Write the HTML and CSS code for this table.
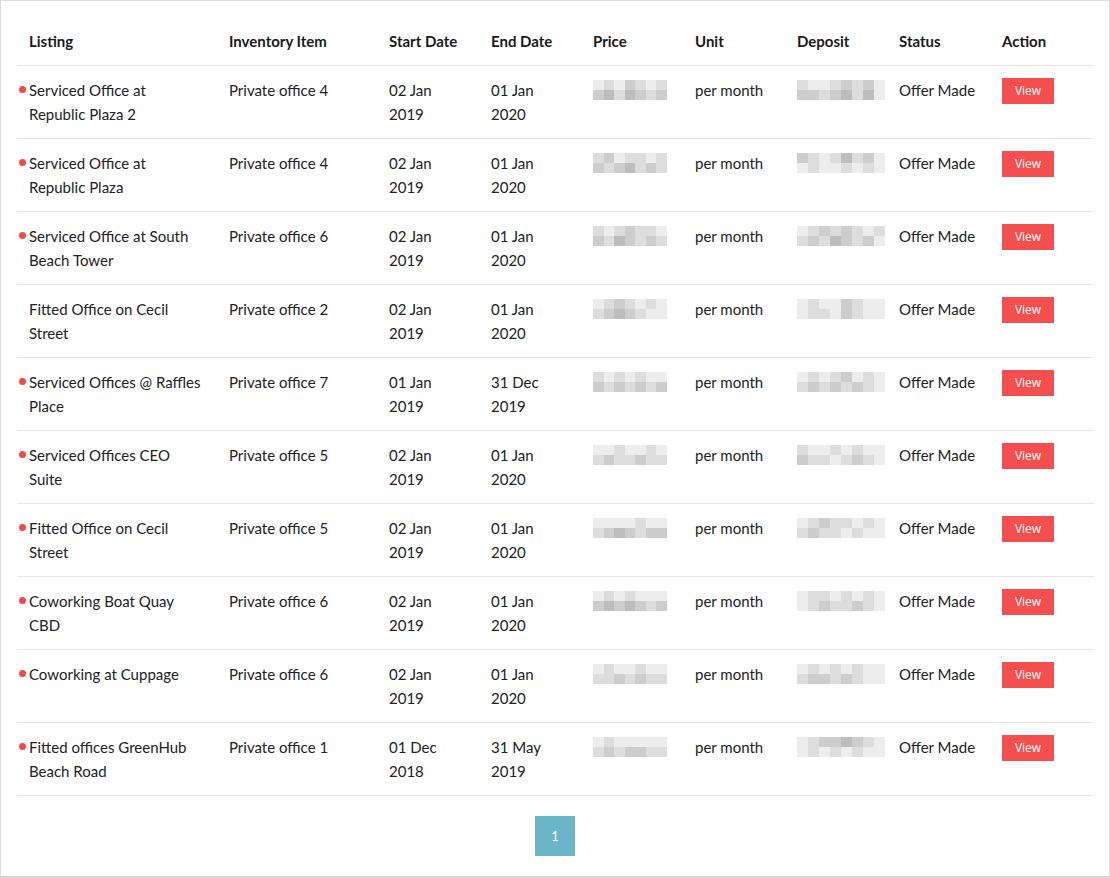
FILE: index.html
```html
<!DOCTYPE html>
<html>
<head>
<meta charset="utf-8">
<link rel="stylesheet" href="styles.css">
</head>
<body>
<div class="frame">
<table class="offers">
<colgroup>
<col class="c-listing"><col class="c-inv"><col class="c-d"><col class="c-d"><col class="c-d"><col class="c-d"><col class="c-d"><col class="c-st"><col class="c-st">
</colgroup>
<thead>
<tr><th>Listing</th><th>Inventory Item</th><th>Start Date</th><th>End Date</th><th>Price</th><th>Unit</th><th>Deposit</th><th>Status</th><th>Action</th></tr>
</thead>
<tbody>
<tr><td class="listing dot">Serviced Office at Republic Plaza 2</td><td>Private office 4</td><td>02 Jan 2019</td><td>01 Jan 2020</td><td><span class="blur"><i class="a"></i><i class="b"></i><i class="a"></i><i class="c"></i><i class="b"></i><i class="a"></i><i class="b"></i><i class="c"></i><i class="d"></i><i class="b"></i><i class="d"></i><i class="c"></i><i class="b"></i><i class="c"></i></span></td><td>per month</td><td><span class="blur wide"><i class="b"></i><i class="a"></i><i class="a"></i><i class="b"></i><i class="c"></i><i class="b"></i><i class="c"></i><i class="a"></i><i class="c"></i><i class="c"></i><i class="b"></i><i class="c"></i><i class="d"></i><i class="b"></i><i class="d"></i><i class="a"></i></span></td><td>Offer Made</td><td><a class="view">View</a></td></tr>
<tr><td class="listing dot">Serviced Office at Republic Plaza</td><td>Private office 4</td><td>02 Jan 2019</td><td>01 Jan 2020</td><td><span class="blur"><i class="b"></i><i class="c"></i><i class="a"></i><i class="b"></i><i class="b"></i><i class="a"></i><i class="b"></i><i class="c"></i><i class="b"></i><i class="c"></i><i class="d"></i><i class="b"></i><i class="c"></i><i class="b"></i></span></td><td>per month</td><td><span class="blur wide"><i class="c"></i><i class="b"></i><i class="a"></i><i class="b"></i><i class="d"></i><i class="b"></i><i class="c"></i><i class="a"></i><i class="a"></i><i class="b"></i><i class="a"></i><i class="a"></i><i class="b"></i><i class="a"></i><i class="b"></i><i class="a"></i></span></td><td>Offer Made</td><td><a class="view">View</a></td></tr>
<tr><td class="listing dot">Serviced Office at South Beach Tower</td><td>Private office 6</td><td>02 Jan 2019</td><td>01 Jan 2020</td><td><span class="blur"><i class="b"></i><i class="a"></i><i class="b"></i><i class="c"></i><i class="b"></i><i class="b"></i><i class="a"></i><i class="c"></i><i class="b"></i><i class="d"></i><i class="c"></i><i class="b"></i><i class="c"></i><i class="b"></i></span></td><td>per month</td><td><span class="blur wide"><i class="a"></i><i class="b"></i><i class="c"></i><i class="b"></i><i class="c"></i><i class="b"></i><i class="a"></i><i class="b"></i><i class="b"></i><i class="c"></i><i class="b"></i><i class="d"></i><i class="c"></i><i class="b"></i><i class="c"></i><i class="a"></i></span></td><td>Offer Made</td><td><a class="view">View</a></td></tr>
<tr><td class="listing">Fitted Office on Cecil Street</td><td>Private office 2</td><td>02 Jan 2019</td><td>01 Jan 2020</td><td><span class="blur"><i class="a"></i><i class="b"></i><i class="c"></i><i class="b"></i><i class="a"></i><i class="b"></i><i class="a"></i><i class="b"></i><i class="c"></i><i class="d"></i><i class="c"></i><i class="b"></i><i class="a"></i><i class="a"></i></span></td><td>per month</td><td><span class="blur wide"><i class="a"></i><i class="b"></i><i class="a"></i><i class="a"></i><i class="c"></i><i class="b"></i><i class="a"></i><i class="a"></i><i class="a"></i><i class="b"></i><i class="b"></i><i class="a"></i><i class="c"></i><i class="b"></i><i class="a"></i><i class="a"></i></span></td><td>Offer Made</td><td><a class="view">View</a></td></tr>
<tr><td class="listing dot">Serviced Offices @ Raffles Place</td><td>Private office 7</td><td>01 Jan 2019</td><td>31 Dec 2019</td><td><span class="blur"><i class="b"></i><i class="a"></i><i class="b"></i><i class="a"></i><i class="b"></i><i class="a"></i><i class="a"></i><i class="c"></i><i class="b"></i><i class="c"></i><i class="b"></i><i class="c"></i><i class="b"></i><i class="c"></i></span></td><td>per month</td><td><span class="blur wide"><i class="a"></i><i class="b"></i><i class="a"></i><i class="b"></i><i class="c"></i><i class="a"></i><i class="b"></i><i class="a"></i><i class="b"></i><i class="c"></i><i class="b"></i><i class="c"></i><i class="b"></i><i class="c"></i><i class="b"></i><i class="a"></i></span></td><td>Offer Made</td><td><a class="view">View</a></td></tr>
<tr><td class="listing dot">Serviced Offices CEO Suite</td><td>Private office 5</td><td>02 Jan 2019</td><td>01 Jan 2020</td><td><span class="blur"><i class="a"></i><i class="a"></i><i class="b"></i><i class="a"></i><i class="a"></i><i class="b"></i><i class="a"></i><i class="b"></i><i class="c"></i><i class="b"></i><i class="b"></i><i class="c"></i><i class="b"></i><i class="b"></i></span></td><td>per month</td><td><span class="blur wide"><i class="b"></i><i class="a"></i><i class="a"></i><i class="b"></i><i class="a"></i><i class="b"></i><i class="a"></i><i class="a"></i><i class="c"></i><i class="b"></i><i class="b"></i><i class="a"></i><i class="b"></i><i class="c"></i><i class="b"></i><i class="a"></i></span></td><td>Offer Made</td><td><a class="view">View</a></td></tr>
<tr><td class="listing dot">Fitted Office on Cecil Street</td><td>Private office 5</td><td>02 Jan 2019</td><td>01 Jan 2020</td><td><span class="blur"><i class="a"></i><i class="a"></i><i class="a"></i><i class="a"></i><i class="b"></i><i class="a"></i><i class="a"></i><i class="b"></i><i class="c"></i><i class="d"></i><i class="c"></i><i class="b"></i><i class="c"></i><i class="c"></i></span></td><td>per month</td><td><span class="blur wide"><i class="a"></i><i class="b"></i><i class="c"></i><i class="b"></i><i class="b"></i><i class="a"></i><i class="b"></i><i class="a"></i><i class="b"></i><i class="c"></i><i class="b"></i><i class="b"></i><i class="a"></i><i class="b"></i><i class="a"></i><i class="a"></i></span></td><td>Offer Made</td><td><a class="view">View</a></td></tr>
<tr><td class="listing dot">Coworking Boat Quay CBD</td><td>Private office 6</td><td>02 Jan 2019</td><td>01 Jan 2020</td><td><span class="blur"><i class="a"></i><i class="b"></i><i class="a"></i><i class="b"></i><i class="a"></i><i class="a"></i><i class="a"></i><i class="c"></i><i class="d"></i><i class="c"></i><i class="d"></i><i class="c"></i><i class="b"></i><i class="c"></i></span></td><td>per month</td><td><span class="blur wide"><i class="a"></i><i class="b"></i><i class="b"></i><i class="a"></i><i class="b"></i><i class="a"></i><i class="b"></i><i class="a"></i><i class="a"></i><i class="b"></i><i class="c"></i><i class="b"></i><i class="b"></i><i class="c"></i><i class="b"></i><i class="a"></i></span></td><td>Offer Made</td><td><a class="view">View</a></td></tr>
<tr><td class="listing dot">Coworking at Cuppage</td><td>Private office 6</td><td>02 Jan 2019</td><td>01 Jan 2020</td><td><span class="blur"><i class="a"></i><i class="b"></i><i class="a"></i><i class="a"></i><i class="b"></i><i class="a"></i><i class="a"></i><i class="b"></i><i class="b"></i><i class="c"></i><i class="b"></i><i class="c"></i><i class="b"></i><i class="b"></i></span></td><td>per month</td><td><span class="blur wide"><i class="a"></i><i class="b"></i><i class="a"></i><i class="b"></i><i class="a"></i><i class="b"></i><i class="a"></i><i class="a"></i><i class="b"></i><i class="c"></i><i class="c"></i><i class="b"></i><i class="c"></i><i class="b"></i><i class="a"></i><i class="a"></i></span></td><td>Offer Made</td><td><a class="view">View</a></td></tr>
<tr><td class="listing dot">Fitted offices GreenHub Beach Road</td><td>Private office 1</td><td>01 Dec 2018</td><td>31 May 2019</td><td><span class="blur"><i class="a"></i><i class="b"></i><i class="a"></i><i class="a"></i><i class="a"></i><i class="a"></i><i class="a"></i><i class="b"></i><i class="c"></i><i class="b"></i><i class="c"></i><i class="c"></i><i class="b"></i><i class="b"></i></span></td><td>per month</td><td><span class="blur wide"><i class="a"></i><i class="b"></i><i class="c"></i><i class="c"></i><i class="d"></i><i class="c"></i><i class="b"></i><i class="a"></i><i class="a"></i><i class="b"></i><i class="a"></i><i class="b"></i><i class="a"></i><i class="b"></i><i class="a"></i><i class="a"></i></span></td><td>Offer Made</td><td><a class="view">View</a></td></tr>
</tbody>
</table>
<nav class="pager"><span class="page current">1</span></nav>
</div>
</body>
</html>
```

FILE: styles.css
```css
html, body {
  margin: 0;
  padding: 0;
  background: #fff;
}
.frame {
  box-sizing: border-box;
  width: 1110px;
  height: 878px;
  border: 1px solid #dcdcdc;
  border-bottom: 2px solid #d6d6d6;
  padding: 16px 16px 0 16px;
  font-family: "Lato", "Liberation Sans", sans-serif;
  font-size: 15px;
  color: #222;
}
.offers {
  width: 1076px;
  border-collapse: collapse;
  table-layout: fixed;
}
.c-listing { width: 200px; }
.c-inv { width: 160px; }
.c-d { width: 102px; }
.c-st { width: 103px; }
.offers th {
  text-align: left;
  font-weight: 700;
  padding: 12px 12px;
  line-height: 24px;
  border-bottom: 1px solid #e6e6e6;
  color: #1a1a1a;
}
.offers td {
  padding: 12px 12px;
  line-height: 24px;
  vertical-align: top;
  border-bottom: 1px solid #e6e6e6;
  height: 48px;
}
.listing {
  position: relative;
}
.listing.dot::before {
  content: "";
  position: absolute;
  left: 2px;
  top: 20px;
  width: 7px;
  height: 7px;
  border-radius: 50%;
  background: #f04a4a;
}
.blur {
  display: grid;
  grid-template-columns: repeat(7, 10.5px);
  grid-template-rows: 10px 10px;
  width: 74px;
  margin-top: 2px;
}
.blur.wide {
  grid-template-columns: repeat(8, 11px);
  width: 88px;
}
.blur i { display: block; }
.blur .a { background: #ededed; }
.blur .b { background: #dddddd; }
.blur .c { background: #cdcdcd; }
.blur .d { background: #bdbdbd; }
.view {
  display: inline-block;
  width: 52px;
  height: 26px;
  line-height: 26px;
  margin-top: 0;
  text-align: center;
  background: #f44e4e;
  color: #fff;
  font-size: 12px;
  font-family: "Open Sans", "Liberation Sans", sans-serif;
  vertical-align: top;
}
.pager {
  display: flex;
  justify-content: center;
  padding-top: 20px;
}
.page {
  width: 40px;
  height: 40px;
  line-height: 40px;
  text-align: center;
  font-size: 13px;
  color: #fff;
  background: #6ab5c8;
}
```
